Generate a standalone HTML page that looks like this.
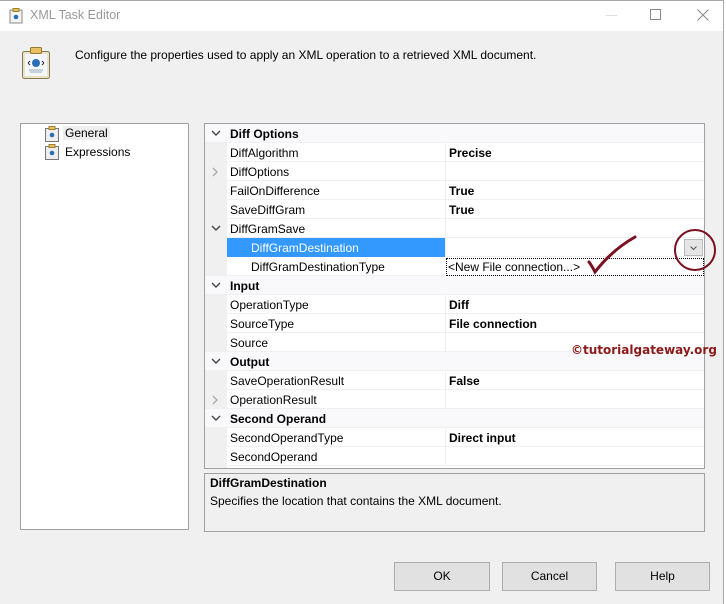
<!DOCTYPE html>
<html><head><style>
*{margin:0;padding:0;box-sizing:border-box}
body{width:726px;height:604px;background:#f0f0f0;font-family:"Liberation Sans",sans-serif;font-size:12px;color:#000;position:relative;overflow:hidden}
.a{position:absolute}
.title{left:0;top:0;width:726px;height:31px;background:#fff;border-top:1px solid #aaa}
.row{position:absolute;left:0;width:499px;height:19px;border-bottom:1px solid #f0f0f0}
.row .n{position:absolute;left:25px;top:3px}
.row .v{position:absolute;left:244px;top:3px;font-weight:bold}
.row .vl{position:absolute;left:240px;top:0;width:1px;height:18px;background:#f0f0f0}
.cat{background:#f9f9fc}
.cat .n{font-weight:bold}
.chev{position:absolute;left:6px;top:6px}
.btn{position:absolute;top:562px;height:29px;background:#e1e1e1;border:1px solid #adadad;text-align:center;line-height:27px}
</style></head><body>
<div class="a title"></div>
<div class="a" style="left:723px;top:0;width:3px;height:604px;background:#fff;border-left:1px solid #aaa"></div>
<svg class="a" style="left:9px;top:8px" width="14" height="16"><rect x="1" y="2" width="12" height="13" fill="#f3f3f3" stroke="#888"/><rect x="4" y="0.5" width="6" height="3" fill="#e6c060" stroke="#a08030"/><circle cx="7" cy="9" r="2.3" fill="#2a6fb5"/></svg>
<div class="a" style="left:30px;top:8px;font-size:12.5px;color:#999">XML Task Editor</div>
<div class="a" style="left:606px;top:15px;width:11px;height:1px;background:#ddd"></div>
<div class="a" style="left:650px;top:9px;width:11px;height:11px;border:1px solid #888"></div>
<svg class="a" style="left:697px;top:9px" width="12" height="12"><path d="M0.5 .5L11.5 11.5M11.5 .5L.5 11.5" stroke="#888"/></svg>
<svg class="a" style="left:21px;top:46px" width="30" height="34"><rect x="1.5" y="5.5" width="27" height="27" rx="2" fill="#e9e3cc" stroke="#8a7a50"/><rect x="4" y="8" width="22" height="22" fill="#f4f7fb"/><rect x="9.5" y="1.5" width="11" height="6" rx="1" fill="#e8c060" stroke="#9a7a30"/><circle cx="15" cy="17" r="4" fill="#2a6fb5"/><path d="M7 17l2-2M7 17l2 2M23 17l-2-2M23 17l-2 2" stroke="#333"/><path d="M8 24h14M9 26h12" stroke="#9ab"/></svg>
<div class="a" style="left:75px;top:48px;font-size:12px">Configure the properties used to apply an XML operation to a retrieved XML document.</div>

<div class="a" style="left:20px;top:123px;width:169px;height:407px;background:#fff;border:1px solid #a0a0a0"></div>
<svg class="a" style="left:44px;top:126px" width="16" height="16"><rect x="1.5" y="2.5" width="13" height="13" fill="#eee" stroke="#777"/><rect x="5" y="0.5" width="6" height="3" fill="#e6c060" stroke="#a08030"/><circle cx="8" cy="9" r="2.3" fill="#2a6fb5"/></svg>
<div class="a" style="left:63px;top:126px;background:#eee;padding:0 2px">General</div>
<svg class="a" style="left:44px;top:144px" width="16" height="16"><rect x="1.5" y="2.5" width="13" height="13" fill="#eee" stroke="#777"/><rect x="5" y="0.5" width="6" height="3" fill="#e6c060" stroke="#a08030"/><circle cx="8" cy="9" r="2.3" fill="#2a6fb5"/></svg>
<div class="a" style="left:65px;top:145px">Expressions</div>

<div class="a" style="left:204px;top:123px;width:501px;height:346px;background:#fff;border:1px solid #a0a0a0">
<div class="a" style="left:0;top:0;width:22px;height:344px;background:#f0f0f0"></div>
<div class="row cat" style="top:0"><svg class="chev" width="10" height="7"><path d="M1 1l4 4 4-4" fill="none" stroke="#444" stroke-width="1.4"/></svg><span class="n">Diff Options</span></div>
<div class="row" style="top:19px"><span class="n">DiffAlgorithm</span><span class="vl"></span><span class="v">Precise</span></div>
<div class="row" style="top:38px"><svg class="chev" style="left:7px;top:5px" width="7" height="10"><path d="M1 1l4 4-4 4" fill="none" stroke="#aaa" stroke-width="1.4"/></svg><span class="n">DiffOptions</span><span class="vl"></span></div>
<div class="row" style="top:57px"><span class="n">FailOnDifference</span><span class="vl"></span><span class="v">True</span></div>
<div class="row" style="top:76px"><span class="n">SaveDiffGram</span><span class="vl"></span><span class="v">True</span></div>
<div class="row" style="top:95px"><svg class="chev" width="10" height="7"><path d="M1 1l4 4 4-4" fill="none" stroke="#444" stroke-width="1.4"/></svg><span class="n">DiffGramSave</span><span class="vl"></span></div>
<div class="row" style="top:114px"><div class="a" style="left:22px;top:0;width:218px;height:19px;background:#3399ff"></div><span class="n" style="left:46px;color:#fff">DiffGramDestination</span><span class="vl"></span><div class="a" style="left:479px;top:1px;width:19px;height:17px;background:#e5e5e5;border:1px solid #bbb"><svg class="a" style="left:5px;top:6px" width="8" height="5"><path d="M.5 .5l3 3 3-3" fill="none" stroke="#555"/></svg></div></div>
<div class="row" style="top:133px"><span class="n" style="left:46px">DiffGramDestinationType</span><div class="a" style="left:241px;top:1px;width:258px;height:18px;border:1px dotted #000"></div><span class="a" style="left:243px;top:3px">&lt;New File connection...&gt;</span></div>
<div class="row cat" style="top:152px"><svg class="chev" width="10" height="7"><path d="M1 1l4 4 4-4" fill="none" stroke="#444" stroke-width="1.4"/></svg><span class="n">Input</span></div>
<div class="row" style="top:171px"><span class="n">OperationType</span><span class="vl"></span><span class="v">Diff</span></div>
<div class="row" style="top:190px"><span class="n">SourceType</span><span class="vl"></span><span class="v">File connection</span></div>
<div class="row" style="top:209px"><span class="n">Source</span><span class="vl"></span></div>
<div class="row cat" style="top:228px"><svg class="chev" width="10" height="7"><path d="M1 1l4 4 4-4" fill="none" stroke="#444" stroke-width="1.4"/></svg><span class="n">Output</span></div>
<div class="row" style="top:247px"><span class="n">SaveOperationResult</span><span class="vl"></span><span class="v">False</span></div>
<div class="row" style="top:266px"><svg class="chev" style="left:7px;top:5px" width="7" height="10"><path d="M1 1l4 4-4 4" fill="none" stroke="#aaa" stroke-width="1.4"/></svg><span class="n">OperationResult</span><span class="vl"></span></div>
<div class="row cat" style="top:285px"><svg class="chev" width="10" height="7"><path d="M1 1l4 4 4-4" fill="none" stroke="#444" stroke-width="1.4"/></svg><span class="n">Second Operand</span></div>
<div class="row" style="top:304px"><span class="n">SecondOperandType</span><span class="vl"></span><span class="v">Direct input</span></div>
<div class="row" style="top:323px"><span class="n">SecondOperand</span><span class="vl"></span></div>
</div>
<div class="a" style="left:571px;top:343px;font-family:'DejaVu Sans',sans-serif;font-weight:bold;font-size:12px;color:#8b1a1a">©tutorialgateway.org</div>
<svg class="a" style="left:0;top:0" width="726" height="604"><ellipse cx="695" cy="250" rx="20" ry="20" fill="none" stroke="#7a1020" stroke-width="2"/><path d="M589 262Q592 266 595 272Q612 250 635 237" fill="none" stroke="#7a1020" stroke-width="3" stroke-linecap="round"/></svg>

<div class="a" style="left:204px;top:473px;width:501px;height:59px;border:1px solid #a0a0a0"></div>
<div class="a" style="left:210px;top:476px;font-weight:bold">DiffGramDestination</div>
<div class="a" style="left:210px;top:494px">Specifies the location that contains the XML document.</div>
<div class="btn" style="left:394px;width:96px">OK</div>
<div class="btn" style="left:502px;width:95px">Cancel</div>
<div class="btn" style="left:615px;width:95px">Help</div>
</body></html>
